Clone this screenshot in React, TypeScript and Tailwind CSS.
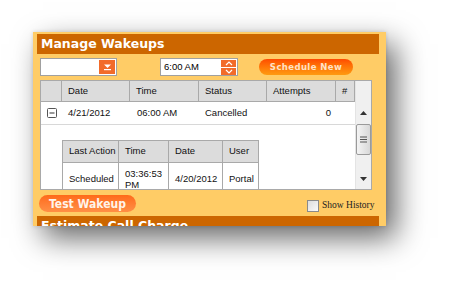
import React from "react";

const sans = { fontFamily: '"Liberation Sans", Arial, sans-serif' };
const bold = { fontFamily: '"DejaVu Sans", Verdana, sans-serif' };

function HeadCell({ w, children }: { w: string; children?: React.ReactNode }) {
  return (
    <div className={`${w} flex h-full shrink-0 items-center border-r border-[#a9a9a9] pl-[6px]`}>
      {children}
    </div>
  );
}

export default function App() {
  return (
    <div className="h-[291px] w-[451px] overflow-hidden bg-white pl-[33px] pt-[32px]" style={sans}>
      <div className="flex h-[194px] w-[353px] flex-col overflow-hidden bg-[#ffcc66] pl-[4px] pt-[2px] shadow-[10px_12px_28px_rgba(0,0,0,0.6),0_0_4px_rgba(0,0,0,0.15)]">
        {/* header */}
        <div className="flex h-[20px] w-[342px] shrink-0 items-center bg-[#cc6600] pl-[4px] text-[12.5px] font-bold text-white" style={bold}>
          Manage Wakeups
        </div>

        {/* controls */}
        <div className="mt-[4px] flex h-[18px] shrink-0 items-center pl-[3px]">
          <div className="flex h-[18px] w-[77px] items-center justify-end border border-[#a0a0a0] bg-white pr-[1px]">
            <div className="flex h-[14px] w-[16px] items-center justify-center bg-[#f26b2a]">
              <svg width="9" height="8" viewBox="0 0 9 8">
                <path d="M1 1.5h7L4.5 5z" fill="#fff" />
                <rect x="1" y="6" width="7" height="1.2" fill="#fff" />
              </svg>
            </div>
          </div>
          <div className="ml-[43px] flex h-[18px] w-[78px] items-center justify-between border border-[#a0a0a0] bg-white pl-[3px] pr-[1px] text-[9.5px] text-black">
            <span>6:00 AM</span>
            <div className="flex h-[15px] w-[15px] flex-col justify-between">
              <div className="flex h-[7px] items-center justify-center bg-[#f26b2a]">
                <svg width="8" height="5" viewBox="0 0 8 5">
                  <path d="M1 4L4 1L7 4" stroke="#fff" strokeWidth="1.2" fill="none" />
                </svg>
              </div>
              <div className="flex h-[7px] items-center justify-center bg-[#f26b2a]">
                <svg width="8" height="5" viewBox="0 0 8 5">
                  <path d="M1 1L4 4L7 1" stroke="#fff" strokeWidth="1.2" fill="none" />
                </svg>
              </div>
            </div>
          </div>
          <div
            className="ml-[21px] flex h-[16px] w-[94px] items-center justify-center rounded-full bg-gradient-to-b from-[#ff4a00] to-[#ff9a10] text-[8.5px] font-bold tracking-[0.4px] text-[#ffe2c8]"
            style={bold}
          >
            Schedule New
          </div>
        </div>

        {/* grid */}
        <div className="ml-[3px] mt-[4px] flex h-[110px] w-[332px] shrink-0 overflow-hidden border border-[#a9a9a9] bg-white text-[9.5px] text-[#111]">
          <div className="flex w-[314px] flex-col">
            <div className="flex h-[21px] shrink-0 items-center border-b border-[#a9a9a9] bg-[#dcdcdc]">
              <HeadCell w="w-[21px]" />
              <HeadCell w="w-[68px]">Date</HeadCell>
              <HeadCell w="w-[69px]">Time</HeadCell>
              <HeadCell w="w-[68px]">Status</HeadCell>
              <HeadCell w="w-[69px]">Attempts</HeadCell>
              <HeadCell w="w-[19px]">#</HeadCell>
            </div>
            <div className="flex h-[23px] shrink-0 items-center border-b border-[#d8d8d8]">
              <div className="flex w-[21px] justify-center pl-[1px]">
                <svg width="10" height="10" viewBox="0 0 10 10">
                  <rect x="0.5" y="0.5" width="9" height="9" rx="1" fill="#fff" stroke="#555" />
                  <rect x="2.5" y="4.5" width="5" height="1" fill="#333" />
                </svg>
              </div>
              <div className="w-[68px] pl-[6px]">4/21/2012</div>
              <div className="w-[69px] pl-[7px]">06:00 AM</div>
              <div className="w-[68px] pl-[6px]">Cancelled</div>
              <div className="w-[69px] pr-[5px] text-right">0</div>
            </div>
            <div className="pl-[21px] pt-[15px]">
              <div className="w-[197px] border-l border-t border-[#a9a9a9]">
                <div className="flex h-[22px] items-center border-b border-[#a9a9a9] bg-[#dcdcdc]">
                  <div className="flex h-full w-[56px] items-center border-r border-[#a9a9a9] pl-[6px]">Last Action</div>
                  <div className="flex h-full w-[50px] items-center border-r border-[#a9a9a9] pl-[6px]">Time</div>
                  <div className="flex h-full w-[54px] items-center border-r border-[#a9a9a9] pl-[6px]">Date</div>
                  <div className="flex h-full w-[36px] items-center border-r border-[#a9a9a9] pl-[6px]">User</div>
                </div>
                <div className="flex h-[32px] items-center">
                  <div className="flex h-full w-[56px] items-center border-r border-[#a9a9a9] pl-[6px]">Scheduled</div>
                  <div className="flex h-full w-[50px] items-center border-r border-[#a9a9a9] pl-[6px] leading-[11px]">
                    03:36:53
                    <br />
                    PM
                  </div>
                  <div className="flex h-full w-[54px] items-center border-r border-[#a9a9a9] pl-[6px]">4/20/2012</div>
                  <div className="flex h-full w-[36px] items-center border-r border-[#a9a9a9] pl-[6px]">Portal</div>
                </div>
              </div>
            </div>
          </div>

          {/* scrollbar */}
          <div className="flex w-[17px] flex-col items-center border-l border-[#e4e4e4] bg-[#f0f0f0]">
            <div className="h-[21px] w-full bg-[#f0f0f0]" />
            <div className="flex h-[22px] items-center">
              <svg width="7" height="4" viewBox="0 0 7 4">
                <path d="M0 4L3.5 0L7 4z" fill="#333" />
              </svg>
            </div>
            <div className="flex h-[31px] w-[15px] items-center justify-center rounded-[2px] border border-[#9a9a9a] bg-gradient-to-r from-[#f4f4f4] to-[#d8d8d8]">
              <svg width="7" height="7" viewBox="0 0 7 7">
                <path d="M0 1h7M0 3.5h7M0 6h7" stroke="#555" strokeWidth="1" />
              </svg>
            </div>
            <div className="flex flex-1 items-end pb-[8px]">
              <svg width="7" height="4" viewBox="0 0 7 4">
                <path d="M0 0L3.5 4L7 0z" fill="#333" />
              </svg>
            </div>
          </div>
        </div>

        {/* footer buttons */}
        <div className="mt-[5px] flex h-[17px] shrink-0 items-center">
          <div
            className="ml-[2px] flex h-[17px] w-[97px] items-center justify-center rounded-full bg-gradient-to-b from-[#ff6a18] to-[#ff8f45] text-[12px] font-bold text-[#fff4ea]"
            style={{ fontFamily: '"Liberation Sans Narrow", "DejaVu Sans Condensed", sans-serif' }}
          >
            Test Wakeup
          </div>
          <div className="ml-[171px] mt-[4px] flex items-center">
            <div className="h-[12px] w-[12px] border border-[#8a8a8a] bg-gradient-to-br from-[#dcdcdc] to-[#fafafa]" />
            <span
              className="ml-[3px] text-[9.5px] text-[#222]"
              style={{ fontFamily: '"Liberation Serif", "Times New Roman", serif' }}
            >
              Show History
            </span>
          </div>
        </div>

        <div className="mt-[4px] flex h-[20px] w-[342px] shrink-0 items-start bg-[#cc6600] pl-[4px] pt-[1px] text-[12.5px] font-bold text-white" style={bold}>
          Estimate Call Charge
        </div>
      </div>
    </div>
  );
}
